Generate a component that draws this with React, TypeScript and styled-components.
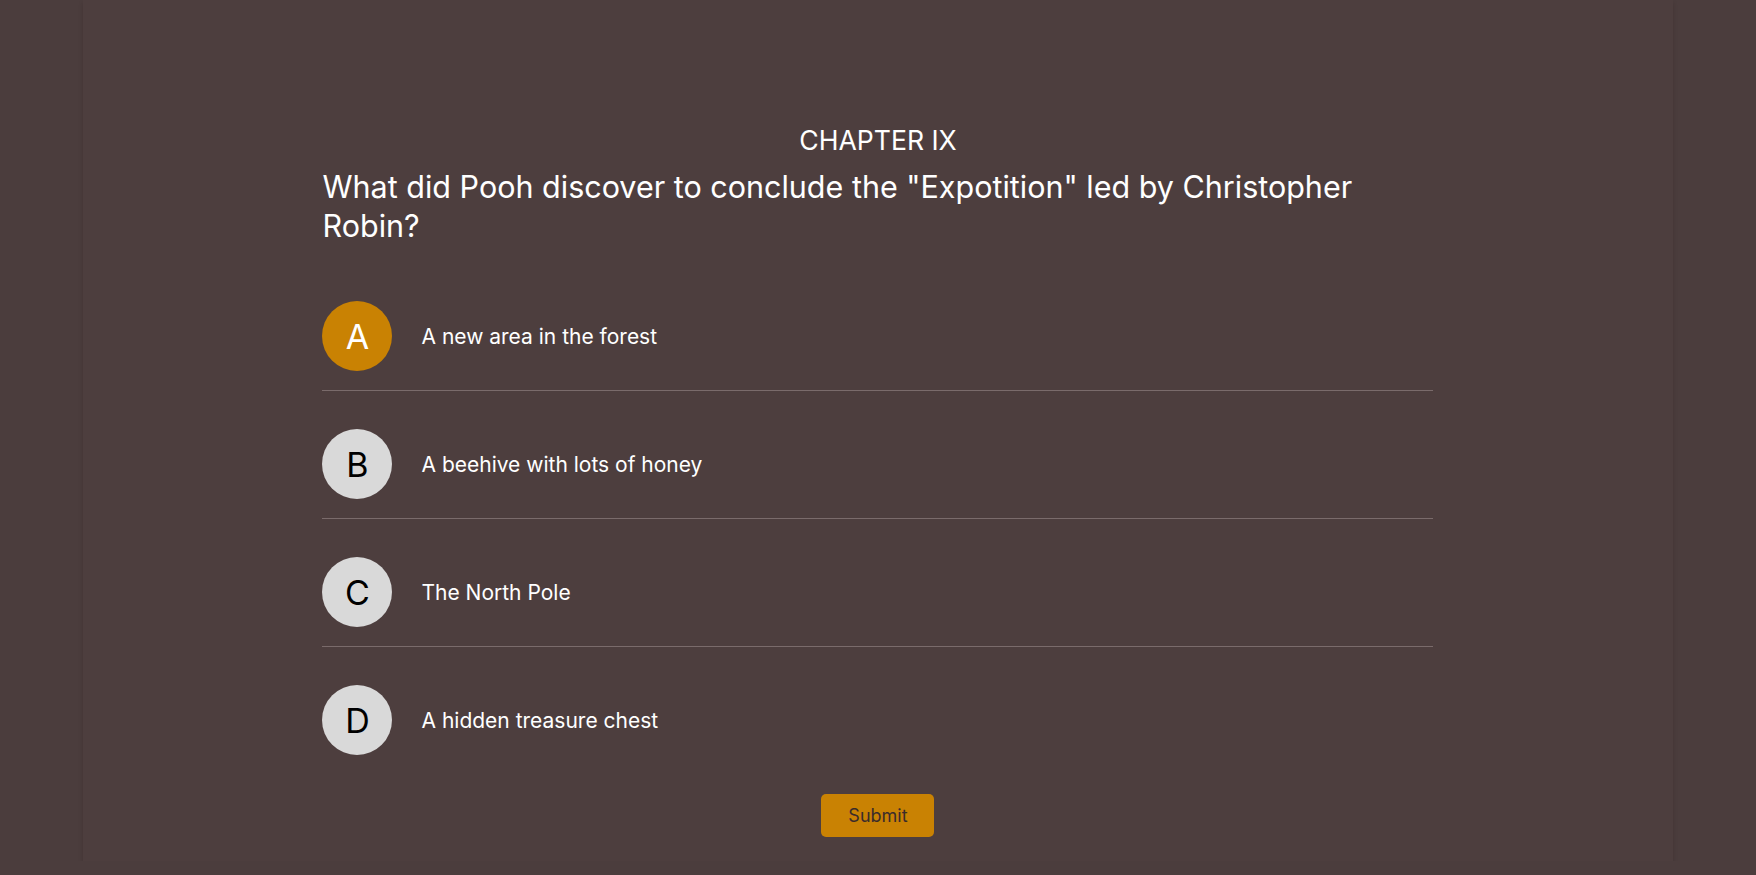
import React, { useState } from "react";
import styled, { createGlobalStyle } from "styled-components";

const GlobalStyle = createGlobalStyle`
  html, body {
    margin: 0;
    padding: 0;
    background: #4b3d3d;
    font-family: Inter, "Noto Sans", "Liberation Sans", sans-serif;
  }
  * {
    box-sizing: border-box;
  }
`;

const colors = {
  orange: "#c98203",
  grey: "#d9d9d9",
  line: "#7a6b6b",
  text: "#ffffff",
};

const Card = styled.main`
  width: 90.6%;
  margin: 0 auto;
  min-height: 860px;
  padding: 125px 0 24px;
  background: #4d3e3e;
  box-shadow: 0 3px 4px rgba(40, 25, 25, 0.25);
`;

const Quiz = styled.section`
  max-width: 1111px;
  margin: 0 auto;
  display: flex;
  flex-direction: column;
  color: ${colors.text};
`;

const Chapter = styled.h2`
  margin: 0 0 12px;
  font-size: 26.6px;
  line-height: 30px;
  font-weight: 400;
  text-align: center;
`;

const Question = styled.h1`
  margin: 0 0 37px;
  font-size: 30.5px;
  line-height: 39px;
  font-weight: 400;
`;

const Options = styled.ul`
  list-style: none;
  margin: 0;
  padding: 0;
  display: flex;
  flex-direction: column;
  gap: 19px;
`;

const Option = styled.li`
  display: flex;
  align-items: center;
  gap: 29px;
  padding: 19px 0;
  border-bottom: 1px solid ${colors.line};
  cursor: pointer;
  &:last-child {
    border-bottom: none;
  }
`;

const Letter = styled.span<{ $active: boolean }>`
  width: 70px;
  height: 70px;
  flex-shrink: 0;
  border-radius: 50%;
  display: flex;
  align-items: center;
  justify-content: center;
  font-size: 34px;
  background: ${(p) => (p.$active ? colors.orange : colors.grey)};
  color: ${(p) => (p.$active ? "#ffffff" : "#000000")};
`;

const Answer = styled.span`
  font-size: 21px;
`;

const SubmitButton = styled.button`
  align-self: center;
  margin-top: 20px;
  width: 113px;
  height: 43px;
  border: none;
  border-radius: 5px;
  background: ${colors.orange};
  color: #3a2b2b;
  font-family: inherit;
  font-size: 18px;
  cursor: pointer;
`;

const answers = [
  { letter: "A", text: "A new area in the forest" },
  { letter: "B", text: "A beehive with lots of honey" },
  { letter: "C", text: "The North Pole" },
  { letter: "D", text: "A hidden treasure chest" },
];

export default function App() {
  const [selected, setSelected] = useState("A");

  return (
    <>
      <GlobalStyle />
      <Card>
        <Quiz>
          <Chapter>CHAPTER IX</Chapter>
          <Question>
            What did Pooh discover to conclude the "Expotition" led by
            Christopher Robin?
          </Question>
          <Options>
            {answers.map((a) => (
              <Option key={a.letter} onClick={() => setSelected(a.letter)}>
                <Letter $active={selected === a.letter}>{a.letter}</Letter>
                <Answer>{a.text}</Answer>
              </Option>
            ))}
          </Options>
          <SubmitButton>Submit</SubmitButton>
        </Quiz>
      </Card>
    </>
  );
}
